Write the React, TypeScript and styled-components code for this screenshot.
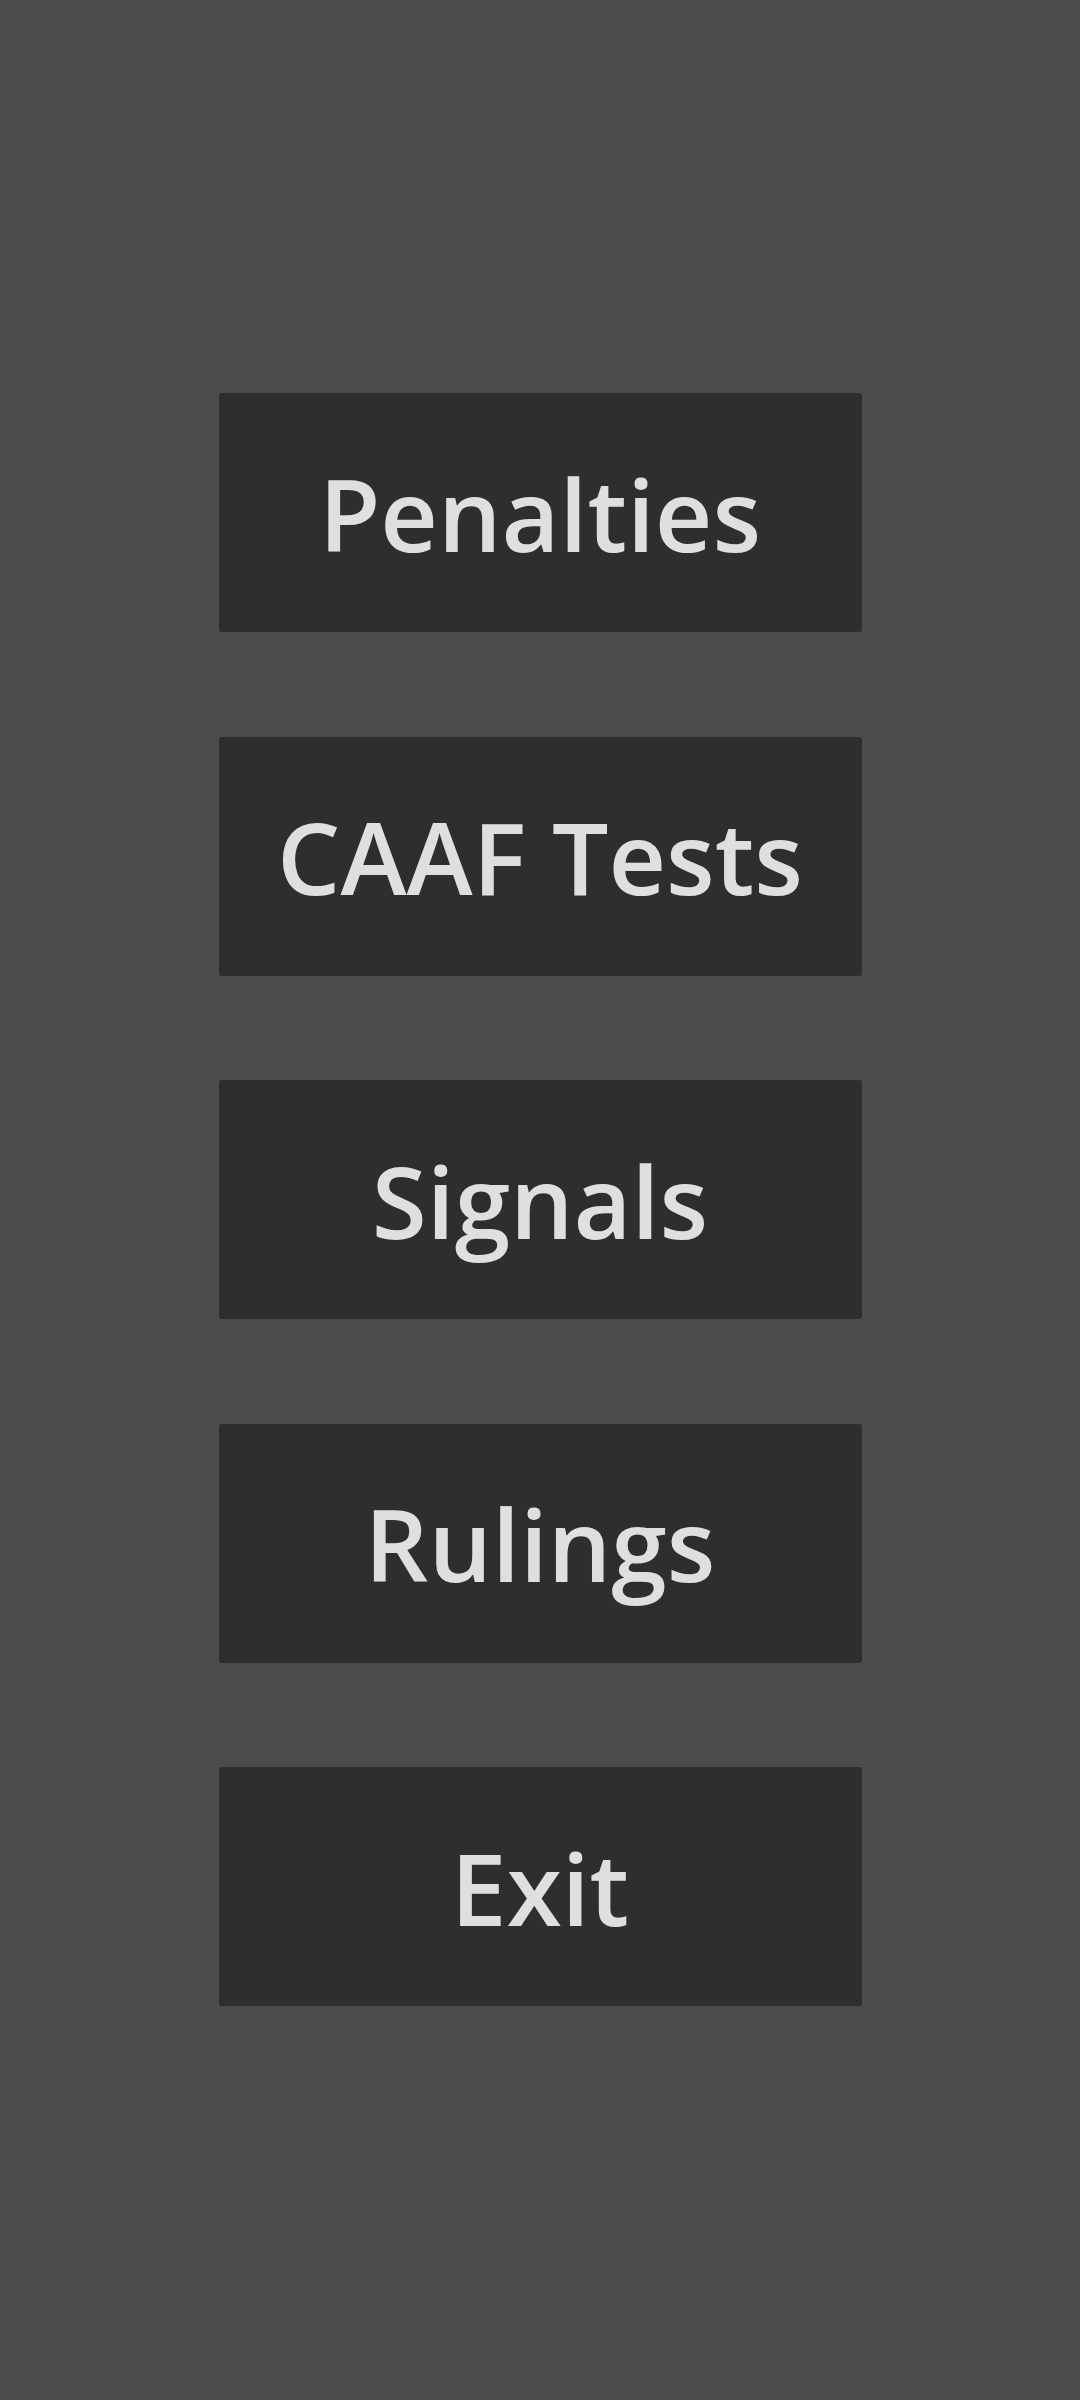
import React from 'react';
import styled, { createGlobalStyle } from 'styled-components';

const GlobalStyle = createGlobalStyle`
  html, body {
    margin: 0;
    padding: 0;
    background: #4c4c4c;
  }
  #root {
    min-height: 100vh;
  }
`;

const Screen = styled.div`
  min-height: 100vh;
  box-sizing: border-box;
  padding: 393px 0 0;
  display: flex;
  flex-direction: column;
  align-items: center;
  gap: 104.5px;
  background: #4c4c4c;
  font-family: "Open Sans", "Noto Sans", sans-serif;
`;

const MenuButton = styled.button`
  width: 643px;
  height: 239px;
  flex-shrink: 0;
  display: flex;
  align-items: center;
  justify-content: center;
  border: none;
  border-radius: 3px;
  background: #2e2e2e;
  color: #dfdfdf;
  font-family: inherit;
  font-size: 100px;
  font-weight: 600;
  line-height: 1;
  padding: 0;
  cursor: pointer;
`;

const items = ['Penalties', 'CAAF Tests', 'Signals', 'Rulings', 'Exit'];

export default function App() {
  return (
    <>
      <GlobalStyle />
      <Screen>
        {items.map((label) => (
          <MenuButton key={label}>{label}</MenuButton>
        ))}
      </Screen>
    </>
  );
}
